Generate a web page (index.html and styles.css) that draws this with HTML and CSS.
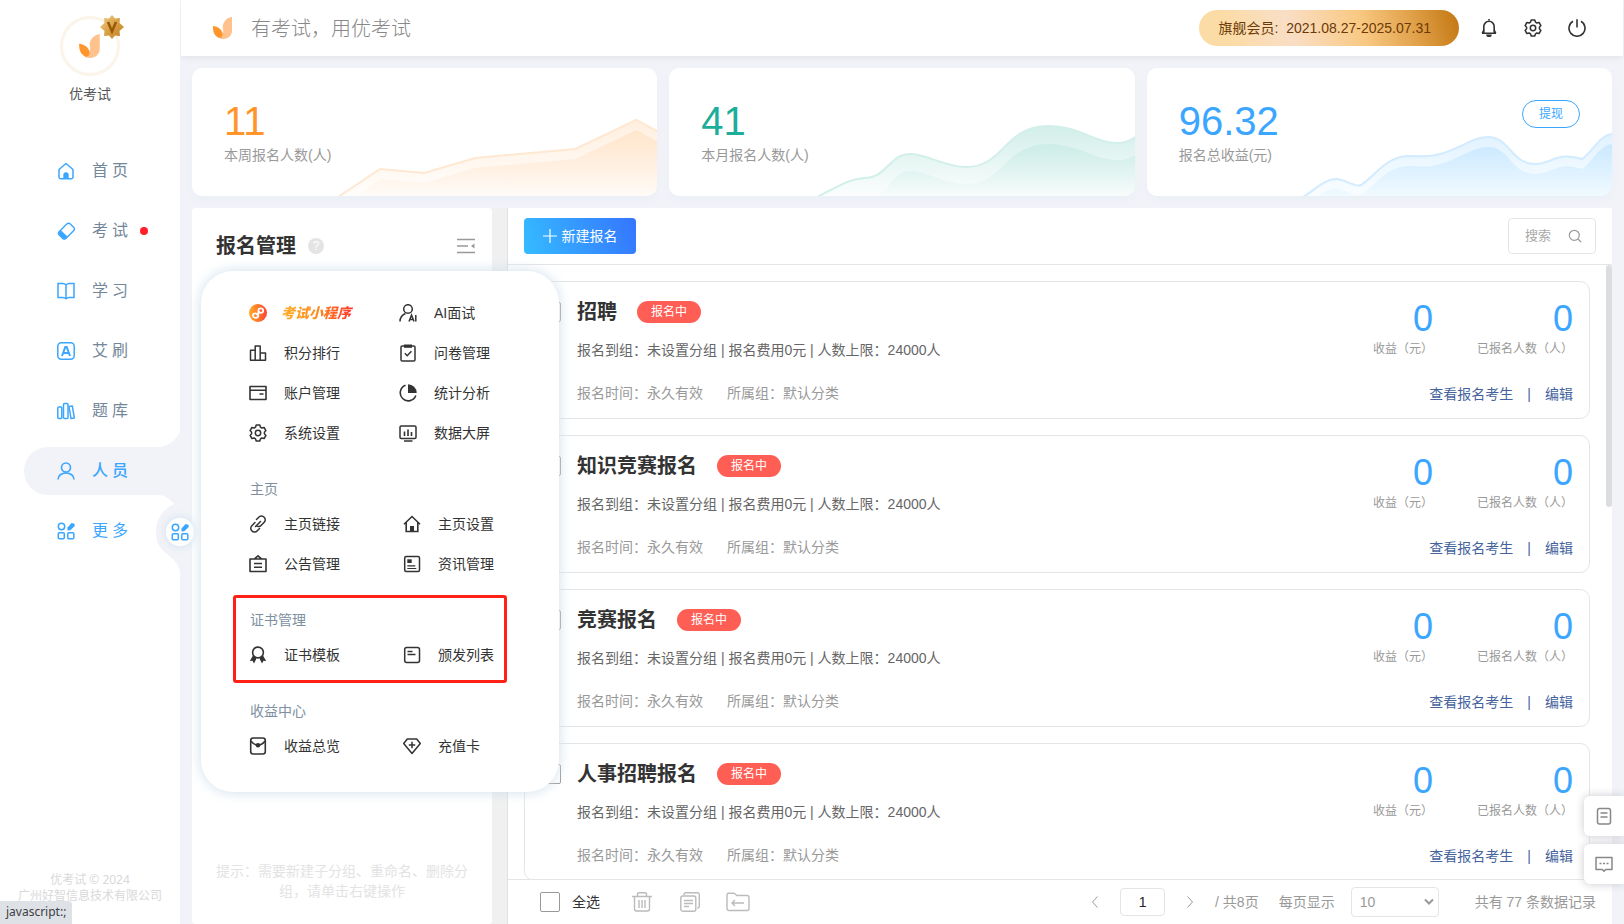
FILE: index.html
```html
<!DOCTYPE html>
<html lang="zh-CN">
<head>
<meta charset="utf-8">
<title>报名管理 - 优考试</title>
<link rel="stylesheet" href="styles.css">
</head>
<body>
<svg class="sprite" aria-hidden="true">
  <defs>
    <linearGradient id="g-mini" x1="0" y1="0" x2="1" y2="0"><stop offset="0" stop-color="#ffae27"/><stop offset="1" stop-color="#ff4436"/></linearGradient>
    <linearGradient id="g-gold" x1="0" y1="0" x2="1" y2="1"><stop offset="0" stop-color="#f3d28f"/><stop offset=".5" stop-color="#d9a046"/><stop offset="1" stop-color="#c07c1c"/></linearGradient>
    <linearGradient id="g-orange" x1="0" y1="52" x2="0" y2="128" gradientUnits="userSpaceOnUse"><stop offset="0" stop-color="#ffdfc0"/><stop offset="1" stop-color="#ffdfc0" stop-opacity=".1"/></linearGradient>
    <linearGradient id="g-green" x1="0" y1="58" x2="0" y2="128" gradientUnits="userSpaceOnUse"><stop offset="0" stop-color="#b4e3db"/><stop offset="1" stop-color="#b4e3db" stop-opacity=".08"/></linearGradient>
    <linearGradient id="g-blue" x1="0" y1="66" x2="0" y2="128" gradientUnits="userSpaceOnUse"><stop offset="0" stop-color="#b8e0ff"/><stop offset="1" stop-color="#c8eaff" stop-opacity=".25"/></linearGradient>
  </defs>
  <symbol id="brand" viewBox="0 0 20 24"><path d="M19 1v13.500c0 5-4 8.500-9 8.500-3 0-5-1-6.500-3C7 20 10 18 10.300 14 8.500 8 12 2 19 1Z" fill="#ffc28c"/><path d="M0 10c5 .5 10 4 9.500 9-.3 3-3 3.500-5 2C1 19-.3 15 0 10Z" fill="#ff952b"/></symbol>
  <symbol id="home" viewBox="0 0 18 18"><path d="M2 7.500 9 1.500l7 6V15a1.800 1.800 0 0 1-1.800 1.800H3.800A1.800 1.800 0 0 1 2 15Z" fill="none" stroke="currentColor" stroke-width="1.500" stroke-linejoin="round"/><path d="M6.300 17v-4a2.700 2.700 0 0 1 5.400 0v4Z" fill="currentColor"/></symbol>
  <symbol id="pen" viewBox="0 0 18 18"><g transform="rotate(45 9 9)"><rect x="4.600" y="1" width="9.600" height="15.500" rx="2.500" fill="none" stroke="currentColor" stroke-width="1.400"/><path d="M4.600 12h9.600v2.500a2.500 2.500 0 0 1-2.500 2.500H7a2.500 2.500 0 0 1-2.400-2.500Z" fill="currentColor"/></g></symbol>
  <symbol id="book" viewBox="0 0 18 18"><path d="M9 3c-1-1-2-1.500-3-1.500H1v14h5c1 0 2 .3 3 1.300 1-1 2-1.300 3-1.300h5v-14h-5c-1 0-2 .5-3 1.500Zm0 0v14" fill="none" stroke="currentColor" stroke-width="1.500"/></symbol>
  <symbol id="abox" viewBox="0 0 18 18"><rect x=".8" y=".8" width="16.400" height="16.400" rx="3.500" fill="none" stroke="currentColor" stroke-width="1.500"/><path d="M5 14 8.300 5h1.400L13 14M6.300 11h5.400" fill="none" stroke="currentColor" stroke-width="2"/></symbol>
  <symbol id="books" viewBox="0 0 18 18"><g fill="none" stroke="currentColor" stroke-width="1.500"><rect x=".8" y="5" width="4" height="11.500" rx="1"/><rect x="6.500" y="1.500" width="4.500" height="15" rx="1"/><path d="m12 4.500 3.300-.6 2 12-3.300.6Z" stroke-linejoin="round"/></g></symbol>
  <symbol id="user" viewBox="0 0 18 18"><circle cx="9" cy="5.500" r="4.500" fill="none" stroke="currentColor" stroke-width="1.600"/><path d="M1 17.500c0-4 3.500-6.500 8-6.500s8 2.500 8 6.500" fill="none" stroke="currentColor" stroke-width="1.600"/></symbol>
  <symbol id="more" viewBox="0 0 18 18"><g fill="none" stroke="currentColor" stroke-width="1.500"><circle cx="4.500" cy="4.500" r="3.200"/><rect x="1.300" y="10.800" width="6" height="6" rx="1"/><rect x="10.800" y="10.800" width="6" height="6" rx="1"/></g><path d="m10.500 5.500 4-4.500 3 .8.200 2.200-4.400 4.200-2.800.2Z" fill="currentColor"/></symbol>
  <symbol id="bell" viewBox="0 0 18 18"><path d="M9 1.200V0M3.800 14V7.500a5.200 5.200 0 0 1 10.400 0V14M2 14.300h14" fill="none" stroke="currentColor" stroke-width="1.600"/><path d="M3.800 11 2.200 14.300M14.200 11l1.600 3.300" stroke="currentColor" stroke-width="1.500"/><path d="M6.200 15.500h5.600a2.800 2.800 0 0 1-5.600 0Z" fill="currentColor"/></symbol>
  <symbol id="gear" viewBox="0 0 18 18"><path d="M7.200 1h3.600l.7 2.200 1.300.8 2.300-.5 1.800 3.100L15.400 8.200v1.600l1.500 1.600-1.800 3.100-2.300-.5-1.300.8-.7 2.200H7.200l-.7-2.200-1.300-.8-2.300.5-1.800-3.100 1.500-1.600V8.200L1.100 6.600l1.800-3.100 2.300.5 1.300-.8Z" fill="none" stroke="currentColor" stroke-width="1.500" stroke-linejoin="round"/><circle cx="9" cy="9" r="2.700" fill="none" stroke="currentColor" stroke-width="1.500"/></symbol>
  <symbol id="power" viewBox="0 0 18 18"><path d="M9 .2v8.300M5 2.300a8 8 0 1 0 8 0" fill="none" stroke="currentColor" stroke-width="1.600"/></symbol>
  <symbol id="mini" viewBox="0 0 18 18"><circle cx="9" cy="9" r="9" fill="url(#g-mini)"/><path d="M9.300 11.500c0 1.500-1.200 2.300-2.700 2.300s-2.700-.9-2.700-2.200c0-1.300 1.200-2.300 2.600-2.300 1 0 1.500.6 1.500 1.300M9.300 11.500v-5c0-1.300 1-2.200 2.400-2.200s2.500.9 2.500 2.100c0 1.400-1 2.400-2.500 2.400-.9 0-1.500-.5-1.500-1.300" fill="none" stroke="#fff" stroke-width="1.700" stroke-linecap="round"/></symbol>
  <symbol id="rank" viewBox="0 0 18 18"><path d="M6.200 16.200V2h5v14.200M6.200 6.200H1.500v10h15V9h-5.300" fill="none" stroke="currentColor" stroke-width="1.500" stroke-linejoin="round"/></symbol>
  <symbol id="card" viewBox="0 0 18 18"><path d="M1 2.500h16v13H1ZM1 6.300h16M10.500 10h4" fill="none" stroke="currentColor" stroke-width="1.600" stroke-linejoin="round"/></symbol>
  <symbol id="useral" viewBox="0 0 18 18"><circle cx="9" cy="5" r="4.300" fill="none" stroke="currentColor" stroke-width="1.500"/><path d="M1 17.500c0-4 2-6.500 5.500-8M10 17.500l2.500-6.500 2.500 6.500M11 15.500h3M16.800 11v6.500" fill="none" stroke="currentColor" stroke-width="1.500"/></symbol>
  <symbol id="clip" viewBox="0 0 18 18"><rect x="2" y="2" width="14" height="15" rx="1.200" fill="none" stroke="currentColor" stroke-width="1.500"/><path d="M5 .5h8v3.300H5Z" fill="currentColor"/><path d="m5.800 9.300 2.400 2.400 4.200-4.500" fill="none" stroke="currentColor" stroke-width="1.500"/></symbol>
  <symbol id="pie" viewBox="0 0 18 18"><path d="M6.500 1.300a8 8 0 1 0 10.300 10.200" fill="none" stroke="currentColor" stroke-width="1.600"/><path d="M9 .3A8.700 8.700 0 0 1 17.700 9H9Z" fill="currentColor"/></symbol>
  <symbol id="screen" viewBox="0 0 18 18"><rect x="1" y="2" width="16" height="12.500" rx="1.200" fill="none" stroke="currentColor" stroke-width="1.500"/><path d="M5.500 7.500v4.500M9 5.500v6.500M12.500 8v4M5 17h8.500" stroke="currentColor" stroke-width="1.600"/></symbol>
  <symbol id="link" viewBox="0 0 18 18"><path d="m7.500 4.500 2.200-2.200a3.500 3.500 0 0 1 5.500 0 3.500 3.500 0 0 1 0 5L12 10.500a3 3 0 0 1-4.500.2M10.500 13.500l-2.200 2.200a3.500 3.500 0 0 1-5.500 0 3.500 3.500 0 0 1 0-5L6 7.500M6.500 11.500l5-5" fill="none" stroke="currentColor" stroke-width="1.500" stroke-linecap="round"/></symbol>
  <symbol id="house" viewBox="0 0 18 18"><path d="M1 9.300 9 1.500l8 7.800M3.200 7.500v9h11.600v-9" fill="none" stroke="currentColor" stroke-width="1.600"/><path d="M7 16.500V11h4v5.500Z" fill="currentColor"/></symbol>
  <symbol id="notice" viewBox="0 0 18 18"><path d="M1 4h16v12.500H1ZM5.500 3.800 9 .8l3.500 3M5 8.500h8M5 12.300h8" fill="none" stroke="currentColor" stroke-width="1.600" stroke-linejoin="round"/></symbol>
  <symbol id="news" viewBox="0 0 18 18"><rect x="1.700" y="1.500" width="14.800" height="15" rx="1.500" fill="none" stroke="currentColor" stroke-width="1.500"/><path d="M4.300 4.300h4.400v3.700H4.300Z" fill="currentColor"/><path d="M4.300 10.800h8M4.300 13.500h9" stroke="currentColor" stroke-width="1.200"/></symbol>
  <symbol id="medal" viewBox="0 0 18 18"><circle cx="9" cy="6.500" r="5.400" fill="none" stroke="currentColor" stroke-width="1.600"/><path d="M4 9.500 .8 15l2.700-.2L5 17.500l2.500-5ZM14 9.500l3.200 5.500-2.700-.2-1.500 2.700-2.500-5Z" fill="currentColor"/></symbol>
  <symbol id="doc" viewBox="0 0 18 18"><rect x="1.700" y="1.500" width="14.800" height="15" rx="2" fill="none" stroke="currentColor" stroke-width="1.500"/><path d="M4.500 5.500h5M4.500 8.500h8" stroke="currentColor" stroke-width="1.400"/></symbol>
  <symbol id="purse" viewBox="0 0 18 18"><rect x="1.700" y="1" width="14.600" height="16" rx="2.500" fill="none" stroke="currentColor" stroke-width="1.600"/><path d="M2 4c2 3 4 4 7 4s5-1 7-4" fill="none" stroke="currentColor" stroke-width="1.500"/><circle cx="9" cy="8.300" r="2.300" fill="currentColor"/></symbol>
  <symbol id="gem" viewBox="0 0 18 18"><path d="M4.300 2h9.400l3.600 4.500L9 16.500.7 6.500ZM9 4.800v6.400M5.800 8h6.400" fill="none" stroke="currentColor" stroke-width="1.500" stroke-linejoin="round"/></symbol>
  <symbol id="fold" viewBox="0 0 20 18"><path d="M1 2.500h18M1 9h11M1 15.500h18" stroke="currentColor" stroke-width="1.500"/><path d="M18.500 6.500v5L15 9Z" fill="currentColor"/></symbol>
  <symbol id="lens" viewBox="0 0 14 14"><path d="m10 10 3 3" stroke="currentColor" stroke-width="1.200"/><circle cx="6.300" cy="6.300" r="5" fill="none" stroke="currentColor" stroke-width="1.200"/></symbol>
  <symbol id="trash" viewBox="0 0 20 20"><path d="M0 4.500h20M5.500 4.500V2A1.500 1.500 0 0 1 7 .8h6A1.500 1.500 0 0 1 14.500 2v2.500M2.500 4.500V17a2 2 0 0 0 2 2h11a2 2 0 0 0 2-2V4.500M7 8v8M10 8v8M13 8v8" fill="none" stroke="currentColor" stroke-width="1.400"/></symbol>
  <symbol id="copy" viewBox="0 0 20 20"><rect x=".8" y="4" width="15" height="15.200" rx="2" fill="none" stroke="currentColor" stroke-width="1.400"/><path d="M4 3V2.500A1.700 1.700 0 0 1 5.700.8h12A1.700 1.700 0 0 1 19.300 2.500V14a2 2 0 0 1-2 2M4 8.500h9M4 11.500h9M4 14.500h5" fill="none" stroke="currentColor" stroke-width="1.400"/></symbol>
  <symbol id="folder" viewBox="0 0 24 20"><path d="M1 3a1.700 1.700 0 0 1 1.700-1.700H8l3 2.200h10A2 2 0 0 1 23 5.500v11a2 2 0 0 1-2 2H3a2 2 0 0 1-2-2ZM9 8l-3 3 3 3M6 11h12" fill="none" stroke="currentColor" stroke-width="1.400"/></symbol>
  <symbol id="sheet" viewBox="0 0 18 18"><rect x="2.500" y="1.500" width="13" height="15.500" rx="2" fill="none" stroke="currentColor" stroke-width="1.500"/><path d="M5.500 6h7M5.500 10h7" stroke="currentColor" stroke-width="1.300"/></symbol>
  <symbol id="chat" viewBox="0 0 18 18"><path d="M1 2.500h16v12h-6.300L9 16.300l-1.700-1.800H1Z" fill="none" stroke="currentColor" stroke-width="1.500" stroke-linejoin="round"/><path d="M4.500 8.500h2M8 8.500h2M11.500 8.500h2" stroke="currentColor" stroke-width="1.500"/></symbol>
</svg>

<div class="app">
  <aside class="sidebar">
    <div class="profile">
      <div class="avatar">
        <svg width="22" height="26"><use href="#brand"/></svg>
        <svg class="vip" width="24" height="24" viewBox="0 0 24 24"><path d="m12 0 3 3.500 5-.5-.5 5L24 12l-4.500 4 .5 5-5-.5L12 24l-3-3.500L4 21l.5-5L0 12l4.500-4L4 3l5 .5Z" fill="url(#g-gold)"/><path d="m8 7 4 9.500L16 7" fill="none" stroke="#9a5a05" stroke-width="2.500"/></svg>
      </div>
      <div class="name">优考试</div>
    </div>
    <nav class="nav">
      <a class="nav-item" href="#"><svg width="18" height="18"><use href="#home"/></svg><span>首页</span></a>
      <a class="nav-item" href="#"><svg width="18" height="18"><use href="#pen"/></svg><span>考试</span><i class="dot"></i></a>
      <a class="nav-item" href="#"><svg width="18" height="18"><use href="#book"/></svg><span>学习</span></a>
      <a class="nav-item" href="#"><svg width="18" height="18"><use href="#abox"/></svg><span>艾刷</span></a>
      <a class="nav-item" href="#"><svg width="18" height="18"><use href="#books"/></svg><span>题库</span></a>
      <a class="nav-item active" href="#"><svg width="18" height="18"><use href="#user"/></svg><span>人员</span>
        <svg class="scoop" width="26" height="142" viewBox="0 0 26 142"><path d="M26 0C22 8 14 15 4 15V63C11 63 16 67 20 72 9 77 2 87 2 100S7 117 13 122C20 127 26 134 26 142Z" fill="#f2f3f8"/></svg></a>
      <a class="nav-item lit" href="#"><svg width="18" height="18"><use href="#more"/></svg><span>更多</span></a>
    </nav>
    <button class="knob" aria-label="更多"><svg width="18" height="18"><use href="#more"/></svg></button>
    <div class="copyright">优考试 © 2024<br>广州好智信息技术有限公司</div>
  </aside>

  <div class="main">
    <header class="header">
      <svg width="20" height="24"><use href="#brand"/></svg>
      <div class="slogan">有考试，用优考试</div>
      <div class="member">旗舰会员:&nbsp; 2021.08.27-2025.07.31</div>
      <div class="tools">
        <button aria-label="通知"><svg width="18" height="18"><use href="#bell"/></svg></button>
        <button aria-label="设置"><svg width="18" height="18"><use href="#gear"/></svg></button>
        <button aria-label="退出"><svg width="18" height="18"><use href="#power"/></svg></button>
      </div>
    </header>

    <section class="stats">
      <div class="stat orange">
        <svg class="chart" viewBox="0 0 465 128" preserveAspectRatio="xMaxYMax slice"><g fill="url(#g-orange)"><path opacity=".5" d="M148 128 188 101 232 105 283 90 383 81 444 52 466 64V128Z"/><path opacity=".7" d="M165 128 188 111 232 115 283 100 383 91 444 62 466 74V128Z"/></g><path d="M146 129 188 101 232 105 283 90 383 81 444 52 466 64" fill="none" stroke="#ffe8d1" stroke-width="2"/></svg>
        <div class="figure">11</div><div class="caption">本周报名人数(人)</div>
      </div>
      <div class="stat green">
        <svg class="chart" viewBox="0 0 465 128" preserveAspectRatio="xMaxYMax slice"><g fill="url(#g-green)"><path opacity=".6" d="M148 129C170 118 180 111 195 110 218 110 220 86 241 86 258 86 275 99 297 99 335 99 335 58 379 58 410 58 425 75 448 75 456 75 462 72 466 69V128H148Z"/><path opacity=".5" d="M206 128C222 122 224 103 241 103 258 103 275 116 297 116 335 116 335 76 379 76 410 76 425 92 448 92 456 92 462 89 466 87V128Z"/></g><path d="M148 129C170 118 180 111 195 110 218 110 220 86 241 86 258 86 275 99 297 99 335 99 335 58 379 58 410 58 425 75 448 75 456 75 462 72 466 69" fill="none" stroke="#d2efea" stroke-width="2"/></svg>
        <div class="figure">41</div><div class="caption">本月报名人数(人)</div>
      </div>
      <div class="stat blue">
        <svg class="chart" viewBox="0 0 465 128" preserveAspectRatio="xMaxYMax slice"><g fill="url(#g-blue)"><path opacity=".45" d="M156 129C170 120 178 111 189 111 198 111 208 120 214 117 228 108 238 89 261 88 275 88 280 90 293 86 314 80 326 69 341 69 362 69 364 96 388 96 404 96 410 83 435 91 446 83 453 66 466 66V128Z"/><path opacity=".7" d="M172 128C178 123 182 121 189 121 198 121 208 130 214 127 228 118 238 99 261 98 275 98 280 100 293 96 314 90 326 79 341 79 362 79 364 106 388 106 404 106 410 93 435 101 446 93 453 76 466 76V128Z"/></g><path d="M156 129C170 120 178 111 189 111 198 111 208 120 214 117 228 108 238 89 261 88 275 88 280 90 293 86 314 80 326 69 341 69 362 69 364 96 388 96 404 96 410 83 435 91 446 83 453 66 466 66" fill="none" stroke="#d2ebff" stroke-width="2"/></svg>
        <div class="figure">96.32</div><div class="caption">报名总收益(元)</div>
        <button class="withdraw">提现</button>
      </div>
    </section>

    <section class="work">
      <div class="tree">
        <div class="tree-head"><h1>报名管理</h1><span class="help">?</span><button aria-label="收起"><svg width="20" height="18"><use href="#fold"/></svg></button></div>
        <p class="hint">提示：需要新建子分组、重命名、删除分组，请单击右键操作</p>
      </div>
      <div class="splitter"></div>
      <div class="content">
        <div class="toolbar">
          <button class="create"><svg width="14" height="14" viewBox="0 0 14 14"><path d="M7 0v14M0 7h14" stroke="#fff" stroke-width="1.200"/></svg>新建报名</button>
          <label class="search"><input type="text" placeholder="搜索" aria-label="搜索"><svg width="14" height="14"><use href="#lens"/></svg></label>
        </div>
        <div class="list">
          <article class="card">
            <input type="checkbox" aria-label="选择 招聘">
            <div class="info"><div class="title"><h2>招聘</h2><span class="badge">报名中</span></div><p>报名到组：未设置分组 | 报名费用0元 | 人数上限：24000人</p><p class="meta"><span>报名时间：永久有效</span><span>所属组：默认分类</span></p></div>
            <div class="side"><div class="counts"><div><b>0</b><span>收益（元）</span></div><div><b>0</b><span>已报名人数（人）</span></div></div><div class="links"><a href="#">查看报名考生</a><span>|</span><a href="#">编辑</a></div></div>
          </article>
          <article class="card">
            <input type="checkbox" aria-label="选择 知识竞赛报名">
            <div class="info"><div class="title"><h2>知识竞赛报名</h2><span class="badge">报名中</span></div><p>报名到组：未设置分组 | 报名费用0元 | 人数上限：24000人</p><p class="meta"><span>报名时间：永久有效</span><span>所属组：默认分类</span></p></div>
            <div class="side"><div class="counts"><div><b>0</b><span>收益（元）</span></div><div><b>0</b><span>已报名人数（人）</span></div></div><div class="links"><a href="#">查看报名考生</a><span>|</span><a href="#">编辑</a></div></div>
          </article>
          <article class="card">
            <input type="checkbox" aria-label="选择 竞赛报名">
            <div class="info"><div class="title"><h2>竞赛报名</h2><span class="badge">报名中</span></div><p>报名到组：未设置分组 | 报名费用0元 | 人数上限：24000人</p><p class="meta"><span>报名时间：永久有效</span><span>所属组：默认分类</span></p></div>
            <div class="side"><div class="counts"><div><b>0</b><span>收益（元）</span></div><div><b>0</b><span>已报名人数（人）</span></div></div><div class="links"><a href="#">查看报名考生</a><span>|</span><a href="#">编辑</a></div></div>
          </article>
          <article class="card">
            <input type="checkbox" aria-label="选择 人事招聘报名">
            <div class="info"><div class="title"><h2>人事招聘报名</h2><span class="badge">报名中</span></div><p>报名到组：未设置分组 | 报名费用0元 | 人数上限：24000人</p><p class="meta"><span>报名时间：永久有效</span><span>所属组：默认分类</span></p></div>
            <div class="side"><div class="counts"><div><b>0</b><span>收益（元）</span></div><div><b>0</b><span>已报名人数（人）</span></div></div><div class="links"><a href="#">查看报名考生</a><span>|</span><a href="#">编辑</a></div></div>
          </article>
          <div class="thumb"></div>
        </div>
        <footer class="footer">
          <label class="all"><input type="checkbox">全选</label>
          <div class="batch">
            <button aria-label="删除"><svg width="20" height="20"><use href="#trash"/></svg></button>
            <button aria-label="复制"><svg width="20" height="20"><use href="#copy"/></svg></button>
            <button aria-label="移动"><svg width="24" height="20"><use href="#folder"/></svg></button>
          </div>
          <div class="pager">
            <button aria-label="上一页"><svg width="6" height="12" viewBox="0 0 6 12"><path d="M5.500.5.500 6l5 5.500" fill="none" stroke="currentColor"/></svg></button>
            <input class="page" type="text" value="1" aria-label="页码">
            <button aria-label="下一页"><svg width="6" height="12" viewBox="0 0 6 12"><path d="m.5.500 5 5.500-5 5.500" fill="none" stroke="currentColor"/></svg></button>
            <span class="pages">/ 共8页</span>
            <label class="per">每页显示<span class="select"><select><option>10</option></select><svg width="10" height="8" viewBox="0 0 10 8"><path d="m1 1.500 4 4 4-4" fill="none" stroke="currentColor" stroke-width="2"/></svg></span></label>
            <span class="total">共有 77 条数据记录</span>
          </div>
        </footer>
      </div>
    </section>
  </div>
</div>

<div class="popup">
  <div class="group first">
    <a class="featured" href="#"><svg width="18" height="18"><use href="#mini"/></svg><span class="promo">考试小程序</span></a>
    <a href="#"><svg width="18" height="18"><use href="#useral"/></svg>AI面试</a>
    <a href="#"><svg width="18" height="18"><use href="#rank"/></svg>积分排行</a>
    <a href="#"><svg width="18" height="18"><use href="#clip"/></svg>问卷管理</a>
    <a href="#"><svg width="18" height="18"><use href="#card"/></svg>账户管理</a>
    <a href="#"><svg width="18" height="18"><use href="#pie"/></svg>统计分析</a>
    <a href="#"><svg width="18" height="18"><use href="#gear"/></svg>系统设置</a>
    <a href="#"><svg width="18" height="18"><use href="#screen"/></svg>数据大屏</a>
  </div>
  <div class="group">
    <h3>主页</h3>
    <a href="#"><svg width="18" height="18"><use href="#link"/></svg>主页链接</a>
    <a href="#"><svg width="18" height="18"><use href="#house"/></svg>主页设置</a>
    <a href="#"><svg width="18" height="18"><use href="#notice"/></svg>公告管理</a>
    <a href="#"><svg width="18" height="18"><use href="#news"/></svg>资讯管理</a>
  </div>
  <div class="group marked">
    <h3>证书管理</h3>
    <a href="#"><svg width="18" height="18"><use href="#medal"/></svg>证书模板</a>
    <a href="#"><svg width="18" height="18"><use href="#doc"/></svg>颁发列表</a>
  </div>
  <div class="group">
    <h3>收益中心</h3>
    <a href="#"><svg width="18" height="18"><use href="#purse"/></svg>收益总览</a>
    <a href="#"><svg width="18" height="18"><use href="#gem"/></svg>充值卡</a>
  </div>
</div>

<div class="float">
  <button aria-label="文档"><svg width="18" height="18"><use href="#sheet"/></svg></button>
  <button aria-label="客服"><svg width="18" height="18"><use href="#chat"/></svg></button>
</div>
<div class="status">javascript:;</div>
</body>
</html>
```
FILE: styles.css
```css
* { box-sizing: border-box; }
body, h1, h2, h3, p { margin: 0; }
body {
  font: 14px/20px "Liberation Sans", "Noto Sans CJK SC", sans-serif;
  color: #333;
  background: #f2f3f8;
  height: 100vh;
  overflow: hidden;
}
a { color: inherit; text-decoration: none; }
button { font: inherit; color: inherit; background: none; border: 0; padding: 0; display: flex; align-items: center; justify-content: center; }
input, select { font: inherit; color: inherit; }
svg { display: block; flex: none; }
.sprite { position: absolute; width: 0; height: 0; }

.app { display: flex; height: 100vh; }

.sidebar { position: relative; z-index: 2; width: 180px; flex: none; background: #fff; display: flex; flex-direction: column; }
.profile { display: flex; flex-direction: column; align-items: center; padding-top: 16px; height: 147px; color: #555; }
.avatar { position: relative; width: 60px; height: 60px; border: 3px solid #faf4e9; border-radius: 50%; display: flex; align-items: center; justify-content: center; }
.vip { position: absolute; right: -7px; top: -4px; }
.name { margin-top: 8px; }
.nav { display: flex; flex-direction: column; gap: 12px; padding-left: 24px; }
.nav-item { position: relative; display: flex; align-items: center; height: 48px; padding-left: 33px; gap: 17px; font-size: 16px; color: #74879a; border-radius: 24px 0 0 24px; }
.nav-item span { letter-spacing: 4px; }
.nav-item > svg { color: #3ba6ff; }
.dot { width: 8px; height: 8px; border-radius: 50%; background: #ff1f29; margin-left: -9px; }
.nav-item.active { background: #f2f3f8; color: #3ba6ff; font-weight: 500; }
.nav-item.lit { color: #3ba6ff; }
.scoop { position: absolute; right: 0; top: -15px; z-index: 1; }
.knob { position: absolute; left: 166px; top: 518px; z-index: 3; width: 28px; height: 28px; border-radius: 50%; background: #fff; color: #3ba6ff; box-shadow: 0 0 10px #cfe0ee; }
.copyright { margin-top: auto; padding-bottom: 20px; font: 12px/16px "Noto Sans", "Noto Sans CJK SC", sans-serif; text-align: center; color: #d9d9d9; }

.main { flex: 1; min-width: 0; display: flex; flex-direction: column; }
.header { height: 56px; flex: none; margin: 0 1px; padding: 0 37px 0 32px; background: #fff; display: flex; align-items: center; box-shadow: 0 2px 6px #e3e4ea; }
.slogan { margin-left: 18px; padding-top: 2px; font-size: 20px; line-height: 28px; font-weight: 300; color: #888; }
.member { margin-left: auto; height: 36px; line-height: 36px; padding: 0 28px 0 20px; border-radius: 18px; color: #6d3a06; background: linear-gradient(75deg, #fbdca6 12%, #f9dec6 35%, #f9c983 62%, #e0a048 82%, #c67b17 98%); }
.tools { display: flex; gap: 26px; margin-left: 21px; }

.stats { display: grid; grid-template-columns: repeat(3, 1fr); gap: 12px; padding: 12px; }
.stat { position: relative; height: 128px; padding: 32px 32px 0; border-radius: 10px; overflow: hidden; background: #fff; box-shadow: 0 4px 8px #eaeff7; }
.chart { position: absolute; inset: 0; width: 100%; height: 100%; }
.figure { position: relative; font-size: 40px; line-height: 42px; }
.caption { position: relative; margin-top: 3px; color: #999; }
.orange .figure { color: #ff952b; }
.green .figure { color: #1cae9b; }
.blue .figure { color: #3ba6ff; }
.withdraw { position: absolute; right: 32px; top: 32px; width: 58px; height: 28px; border: 1px solid #3ba6ff; border-radius: 14px; font-size: 12px; color: #3ba6ff; background: #fff; }

.work { flex: 1; min-height: 0; display: flex; padding: 0 12px; }
.tree { width: 300px; flex: none; background: #fff; border-radius: 4px; padding: 24px 16px 23px 24px; display: flex; flex-direction: column; justify-content: space-between; }
.tree-head { display: flex; align-items: center; }
.tree-head h1 { font-size: 20px; line-height: 28px; }
.help { width: 16px; height: 16px; margin-left: 12px; border-radius: 50%; background: #e4e4e4; color: #fff; font-size: 12px; line-height: 16px; text-align: center; }
.tree-head button { margin-left: auto; color: #999; }
.hint { padding-right: 8px; text-align: center; color: #e3e3e3; }
.splitter { width: 16px; flex: none; background: #f0f0f0; border-right: 1px solid #e0e0e0; }
.content { flex: 1; min-width: 0; background: #fff; display: flex; flex-direction: column; }
.toolbar { height: 57px; flex: none; display: flex; justify-content: space-between; padding: 10px 16px; border-bottom: 1px solid #e3e5e6; }
.create { width: 112px; height: 36px; gap: 5px; border-radius: 4px; color: #fff; background: linear-gradient(70deg, #35bcff, #3575ff); }
.search { display: flex; align-items: center; width: 88px; height: 36px; padding: 0 13px 0 16px; border: 1px solid #e3e5e6; border-radius: 4px; color: #999; }
.search input { flex: 1; min-width: 0; border: 0; padding: 0; font-size: 13px; outline: 0; background: none; }
.search input::placeholder { color: #aaa; }

.list { position: relative; flex: 1; min-height: 0; overflow: hidden; padding: 16px 22px 0 16px; display: flex; flex-direction: column; gap: 16px; }
.thumb { position: absolute; right: 0; top: 0; width: 6px; height: 242px; border-radius: 3px; background: #dcdddf; }
.card { flex: none; display: flex; height: 138px; padding: 16px 16px 14px; border: 1px solid #e3e5e6; border-radius: 10px; }
input[type="checkbox"] { appearance: none; flex: none; width: 20px; height: 20px; margin: 0; border: 1px solid #999; border-radius: 2px; background: #fff; }
.card input { margin: 4px 16px 0 0; }
.info { flex: 1; color: #666; }
.title { display: flex; align-items: center; gap: 20px; height: 28px; }
.title h2 { font-size: 20px; line-height: 28px; color: #333; }
.badge { height: 22px; padding: 0 14px; border-radius: 11px; background: #ff5e55; color: #fff; font-size: 12px; line-height: 22px; }
.info p { margin-top: 14px; line-height: 20px; }
.info .meta { display: flex; gap: 24px; margin-top: 23px; color: #999; }
.side { display: flex; flex-direction: column; align-items: flex-end; justify-content: space-between; }
.counts { display: flex; gap: 44px; }
.counts div { display: flex; flex-direction: column; align-items: flex-end; }
.counts b { font-size: 36px; line-height: 42px; font-weight: 400; color: #3ba6ff; }
.counts span { font-size: 12px; line-height: 18px; color: #999; }
.links { display: flex; gap: 14px; color: #45639c; line-height: 20px; }

.footer { height: 45px; flex: none; display: flex; align-items: center; padding: 0 16px 0 32px; border-top: 1px solid #e3e5e6; color: #999; }
.all { display: flex; align-items: center; gap: 12px; color: #333; }
.batch { display: flex; gap: 24px; margin-left: 30px; color: #bbb; }
.batch button { width: 24px; }
.pager { display: flex; align-items: center; margin-left: auto; }
.page { width: 45px; height: 28px; margin: 0 22px; padding: 0; border: 1px solid #e3e5e6; border-radius: 4px; text-align: center; color: #222; background: #fff; }
.pages { margin: 0 20px 0 22px; }
.per { display: flex; align-items: center; gap: 16px; }
.select { position: relative; color: #999; }
.select select { appearance: none; display: block; width: 88px; height: 30px; padding: 0 8px; border: 1px solid #e3e5e6; border-radius: 4px; background: #fff; }
.select svg { position: absolute; right: 5px; top: 11px; }
.total { margin-left: 36px; }

.popup { position: absolute; left: 201px; top: 271px; z-index: 4; width: 358px; padding: 22px 32px 26px; border-radius: 32px; background: #fff; box-shadow: 0 0 14px #cfdfea; display: flex; flex-direction: column; gap: 21px; }
.group { display: grid; grid-template-columns: 154px 1fr; padding-left: 16px; }
.group.first { grid-template-columns: 150px 1fr; }
.group h3 { grid-column: 1 / -1; margin-left: 1px; font-size: 14px; line-height: 30px; font-weight: 400; color: #7d8fa0; }
.group a { display: flex; align-items: center; gap: 17px; height: 40px; }
.group .featured { gap: 14px; }
.marked { position: relative; }
.marked::after { content: ""; position: absolute; left: 0; right: 20px; top: -10px; bottom: -8px; border: 3px solid #ff2016; border-radius: 3px; }
.promo { padding-right: 4px; font-weight: 900; font-style: italic; color: transparent; background: linear-gradient(90deg, #ffae27, #ff8a1f 50%, #ff3030); background-clip: text; }

.float { position: absolute; right: 0; bottom: 40px; z-index: 5; display: flex; flex-direction: column; gap: 8px; color: #888; }
.float button { width: 40px; height: 40px; border-radius: 6px 0 0 6px; background: #fff; box-shadow: 0 0 10px #c9c9cf; }
.status { position: absolute; left: 0; bottom: 0; z-index: 6; height: 23px; padding: 0 6px; border-radius: 0 4px 0 0; background: #dee1e6; color: #3c4043; font: 12px/22px "Noto Sans", sans-serif; }
```
